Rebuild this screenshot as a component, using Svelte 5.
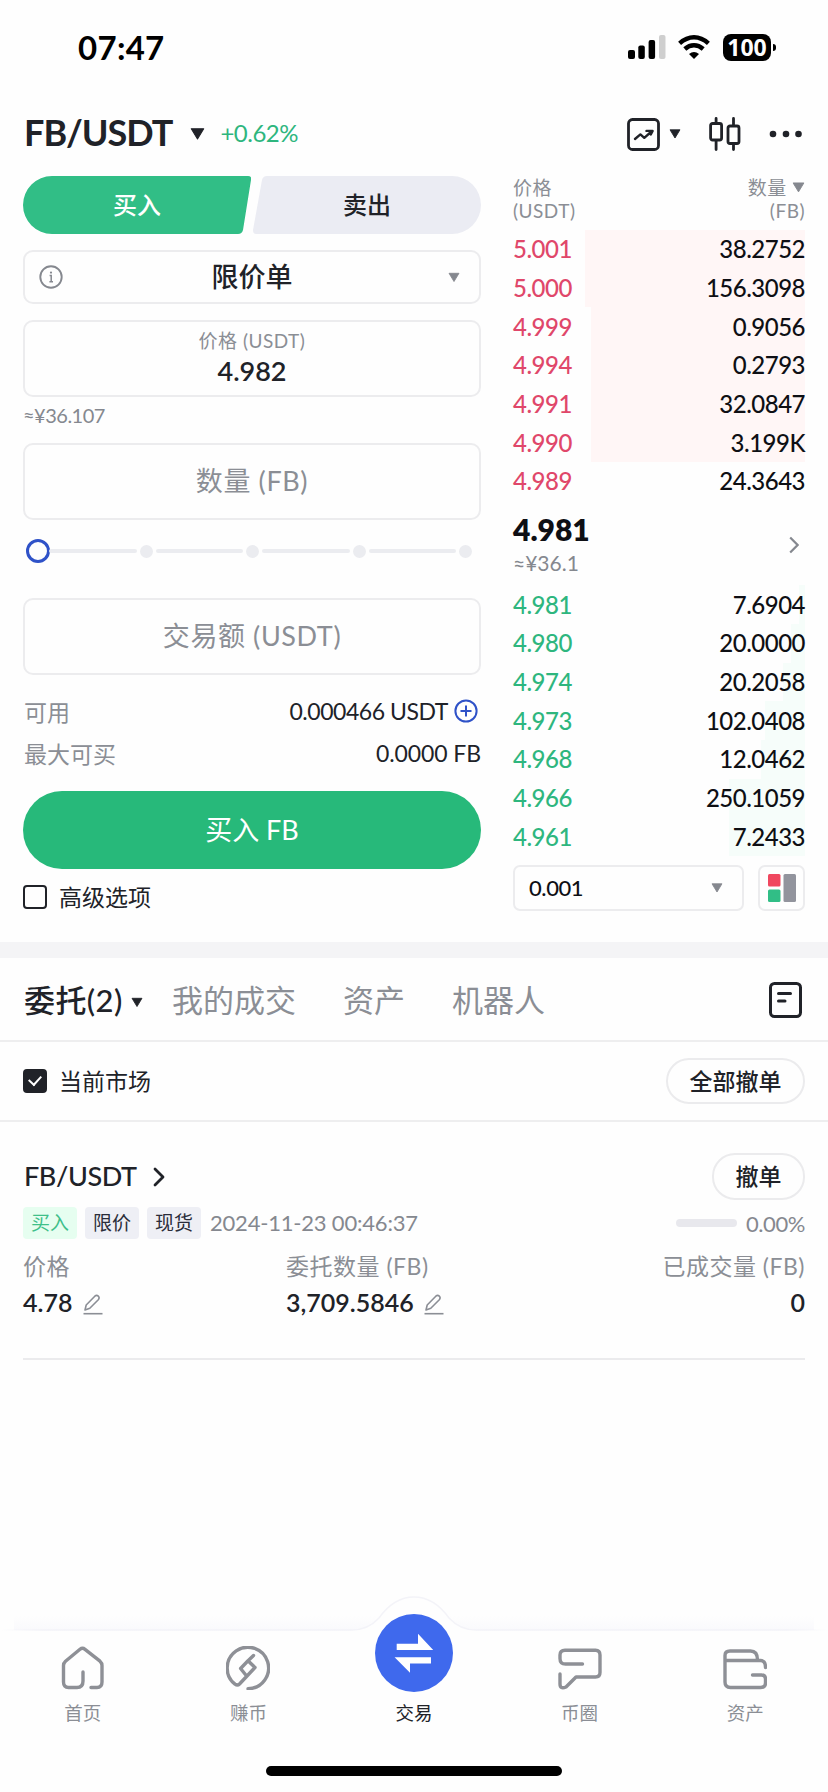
<script>
  const asks = [
    { price: '5.001', qty: '38.2752', depth: 220 },
    { price: '5.000', qty: '156.3098', depth: 220 },
    { price: '4.999', qty: '0.9056', depth: 214 },
    { price: '4.994', qty: '0.2793', depth: 214 },
    { price: '4.991', qty: '32.0847', depth: 214 },
    { price: '4.990', qty: '3.199K', depth: 214 },
    { price: '4.989', qty: '24.3643', depth: 0 },
  ];

  const bids = [
    { price: '4.981', qty: '7.6904', depth: 6 },
    { price: '4.980', qty: '20.0000', depth: 14 },
    { price: '4.974', qty: '20.2058', depth: 22 },
    { price: '4.973', qty: '102.0408', depth: 40 },
    { price: '4.968', qty: '12.0462', depth: 44 },
    { price: '4.966', qty: '250.1059', depth: 76 },
    { price: '4.961', qty: '7.2433', depth: 76 },
  ];

  let side = $state('buy');
  let advanced = $state(false);
  let currentMarket = $state(true);
</script>

{#snippet caret(w, h)}
  <svg class="caret" width={w} height={h} viewBox="0 0 14 11"><path d="M1.2 .6H12.8L7 10.2Z" fill="currentColor" stroke="currentColor" stroke-linejoin="round" /></svg>
{/snippet}

{#snippet pencil()}
  <svg class="pencil" width="20" height="21" viewBox="0 0 20 21" fill="none" stroke="#8b8e95" stroke-width="1.6" stroke-linejoin="round">
    <path d="M2 16L3.2 11L11.8 2.2Q13.6 .6 15.3 2.1Q16.9 3.8 15.3 5.7L6.8 14.2Z" />
    <path d="M.5 19.7H19.5" />
  </svg>
{/snippet}

<div class="screen">
  <header class="status">
    <span class="time">07:47</span>
    <div class="status-icons">
      <svg width="38" height="24" viewBox="0 0 38 24">
        <rect x="0" y="15" width="7" height="9" rx="2" />
        <rect x="10.3" y="10.5" width="6.5" height="13.5" rx="2" />
        <rect x="20.6" y="5" width="6.5" height="19" rx="2" />
        <rect x="31" y="0" width="6.5" height="24" rx="2" fill="#cfcfcf" />
      </svg>
      <svg width="32" height="24" viewBox="0 0 32 24" fill="none" stroke="#000" stroke-width="4.4">
        <path d="M1.6 8.4Q8.3 2.3 16 2.3T30.4 8.4" />
        <path d="M6.8 14Q11 10.2 16 10.2T25.2 14" />
        <path d="M11 19Q16 14.8 21 19L16 24Z" fill="#000" stroke="none" />
      </svg>
      <div class="battery">100</div>
    </div>
  </header>

  <div class="pair-bar">
    <h1>FB/USDT</h1>
    {@render caret(15, 12)}
    <span class="change">+0.62%</span>
    <div class="tools">
      <svg width="33" height="33" viewBox="0 0 33 33" fill="none" stroke="#202228" stroke-width="2.8" stroke-linecap="round" stroke-linejoin="round">
        <rect x="1.5" y="1.5" width="30" height="30" rx="4" />
        <path d="M8 21L13.4 16.4L17.3 19.8L25 13M19.5 12.9H25.6L23.8 16.5" stroke-width="2.4" />
      </svg>
      {@render caret(12, 10)}
      <svg class="candles" width="32" height="34" viewBox="0 0 32 34" fill="none" stroke="#202228" stroke-width="2.8" stroke-linecap="round">
        <rect x="1.6" y="6.5" width="11" height="16.5" rx="2" />
        <rect x="19" y="9" width="11" height="17.5" rx="2" />
        <path d="M7.1 1.5V6M7.1 23.5V32.5M24.5 1.5V8.5M24.5 27V32.5" />
      </svg>
      <svg width="34" height="8" viewBox="0 0 34 8" fill="#202228"><circle cx="4" cy="4" r="3.3" /><circle cx="17" cy="4" r="3.3" /><circle cx="29.5" cy="4" r="3.3" /></svg>
    </div>
  </div>

  <main class="trade">
    <section class="form">
      <div class="sides">
        <button class="buy" class:active={side === 'buy'} onclick={() => (side = 'buy')}>买入</button>
        <button class="sell" class:active={side === 'sell'} onclick={() => (side = 'sell')}>卖出</button>
      </div>

      <div class="box select">
        <svg width="24" height="24" viewBox="0 0 24 24" fill="none" stroke="#85888f" stroke-width="1.9">
          <circle cx="12" cy="12" r="10.7" />
          <path d="M10.6 10.6H12.2V16.6M10.4 16.8H14" stroke-width="1.5" /><circle cx="12" cy="7.6" r="1.1" fill="#85888f" stroke="none" />
        </svg>
        <span>限价单</span>
        {@render caret(12, 11)}
      </div>

      <div class="box price">
        <small>价格 (USDT)</small>
        <b>4.982</b>
      </div>
      <div class="approx">≈¥36.107</div>

      <div class="box field">数量 (FB)</div>

      <div class="slider">
        <i class="knob"></i>
        {#each [25, 50, 75, 100] as step (step)}
          <i class="track"></i><i class="stop"></i>
        {/each}
      </div>

      <div class="box field">交易额 (USDT)</div>

      <div class="info first">
        <span>可用</span>
        <b>0.000466 USDT</b>
        <svg width="24" height="24" viewBox="0 0 24 24" fill="none" stroke="#2f52c8" stroke-width="2"><circle cx="12" cy="12" r="10.6" /><path d="M12 6.5V17.5M6.5 12H17.5" /></svg>
      </div>
      <div class="info"><span>最大可买</span><b>0.0000 FB</b></div>

      <button class="submit">买入 FB</button>

      <label class="check">
        <input type="checkbox" bind:checked={advanced} />高级选项
      </label>
    </section>

    <section class="book">
      <div class="book-head">
        <span>价格<br />(USDT)</span>
        <span class="right">数量 {@render caret(13, 11)}<br />(FB)</span>
      </div>
      {#each asks as row (row.price)}
        <div class="row ask"><i style="width: {row.depth}px"></i><span>{row.price}</span><b>{row.qty}</b></div>
      {/each}
      <div class="last">
        <div><strong>4.981</strong><small>≈¥36.1</small></div>
        <svg width="10" height="18" viewBox="0 0 10 18" fill="none" stroke="#85888f" stroke-width="2.2"><path d="M1.2 1.5L8.6 9L1.2 16.5" /></svg>
      </div>
      {#each bids as row (row.price)}
        <div class="row bid"><i style="width: {row.depth}px"></i><span>{row.price}</span><b>{row.qty}</b></div>
      {/each}
      <div class="book-foot">
        <div class="box precision">0.001 {@render caret(12, 10)}</div>
        <div class="box layout">
          <svg width="28" height="28" viewBox="0 0 28 28"><rect width="12.5" height="12.5" rx="1.5" fill="#f0475f" /><rect y="15.5" width="12.5" height="12.5" rx="1.5" fill="#31be86" /><rect x="15.5" width="12.5" height="28" rx="1.5" fill="#92949d" /></svg>
        </div>
      </div>
    </section>
  </main>

  <nav class="tabs">
    <span class="current">委托(2) {@render caret(12, 11)}</span>
    <span>我的成交</span>
    <span>资产</span>
    <span>机器人</span>
    <svg class="history" width="33" height="36" viewBox="0 0 33 36" fill="none" stroke="#202228" stroke-width="3" stroke-linecap="round"><rect x="1.5" y="1.5" width="30" height="33" rx="4" /><path d="M9.5 11.5H21.5M9.5 19H16" /></svg>
  </nav>

  <div class="filter">
    <label class="check">
      <input type="checkbox" bind:checked={currentMarket} />当前市场
    </label>
    <button class="pill">全部撤单</button>
  </div>

  <article class="order">
    <div class="order-top">
      <h2>FB/USDT</h2>
      <svg width="12" height="20" viewBox="0 0 12 20" fill="none" stroke="#202228" stroke-width="2.8" stroke-linecap="round" stroke-linejoin="round"><path d="M2 2L10 10L2 18" /></svg>
      <button class="pill small">撤单</button>
    </div>
    <div class="meta">
      <span class="tag green">买入</span>
      <span class="tag">限价</span>
      <span class="tag">现货</span>
      <time>2024-11-23 00:46:37</time>
      <i class="progress"></i>
      <span class="filled">0.00%</span>
    </div>
    <dl>
      <div><dt>价格</dt><dd>4.78 {@render pencil()}</dd></div>
      <div><dt>委托数量 (FB)</dt><dd>3,709.5846 {@render pencil()}</dd></div>
      <div><dt>已成交量 (FB)</dt><dd>0</dd></div>
    </dl>
  </article>

  <footer>
    <svg class="edge" width="828" height="60" viewBox="0 0 828 60">
      <defs>
        <linearGradient id="fade" gradientUnits="userSpaceOnUse" x1="0" x2="828"><stop offset="0" stop-color="#f3f3f8" stop-opacity="0" /><stop offset=".05" stop-color="#f3f3f8" /><stop offset=".95" stop-color="#f3f3f8" /><stop offset="1" stop-color="#f3f3f8" stop-opacity="0" /></linearGradient>
        <linearGradient id="haze" gradientUnits="userSpaceOnUse" x1="0" x2="0" y1="26" y2="40"><stop offset="0" stop-color="#f9f9fc" stop-opacity="0" /><stop offset="1" stop-color="#f9f9fc" /></linearGradient>
      </defs>
      <path d="M14 26H380L379 28Q368 40 352 40H14ZM814 26H448L449 28Q460 40 476 40H814Z" fill="url(#haze)" />
      <path d="M0 40H352Q368 40 379 28Q394 7 414 7T449 28Q460 40 476 40H828" fill="none" stroke="url(#fade)" stroke-width="1.5" />
    </svg>
    <div class="nav">
      <a href="#home">
        <svg width="44" height="44" viewBox="0 0 44 44"><path d="M22 32V26V35Q22 41.5 16 41.5H7.5Q2.5 41.5 2.5 36V19.5Q2.5 17 4.5 15.2L19 3.3Q21.5 1.3 24 3.3L39 15.2Q41 17 41 19.5V36Q41 41.5 36 41.5H30" /></svg>
        首页
      </a>
      <a href="#earn">
        <svg width="44" height="44" viewBox="0 0 44 44"><path d="M22 42.7A20.7 20.7 0 1 0 9 38.2Q11.5 40 13.5 38L29 21.5L22 14.8L14.6 22.5L20.2 29.5M20.5 16.3L27.5 9.5" /></svg>
        赚币
      </a>
      <a href="#trade" class="active">
        <span class="fab">
          <svg width="40" height="40" viewBox="0 0 40 40" fill="#fff"><path d="M2.7 10.7H24V.8L39.2 17H2.7ZM37 24.3H.6L16 39.8V30.5H37Z" /></svg>
        </span>
        交易
      </a>
      <a href="#community">
        <svg width="44" height="44" viewBox="0 0 44 44"><path d="M24.5 18H7.5Q2 18 2 12.5V9Q2 4.2 7 4.2H37.5Q42 4.2 42 9V26.5Q42 31 37.5 31H18L8 41Q2 43.5 2 38V28" /></svg>
        币圈
      </a>
      <a href="#assets">
        <svg width="44" height="44" viewBox="0 0 44 44"><path d="M2 14.5V36Q2 41.5 7.5 41.5H37.5Q42.5 41.5 42.5 37V33Q42.5 29 38.5 29H29.5M2 14.5H37.5Q42.5 14.5 42.5 21.5M2 14.5V9.5Q2 5 7 5H27.5Q34.5 5 34.5 14" /></svg>
        资产
      </a>
    </div>
    <div class="home-bar"></div>
  </footer>
</div>

<style>
  :global(body) { margin: 0; background: #fefefe; }
  .screen {
    width: 828px; height: 1792px; display: flex; flex-direction: column; overflow: hidden;
    font-family: Lato, "Noto Sans CJK SC", sans-serif; color: #202228; background: #fefefe;
  }
  * { box-sizing: border-box; }
  svg { display: block; flex: none; }
  h1, h2, dl, dd { margin: 0; }
  b { font-weight: 500; }
  button { border: 0; padding: 0 0 3px; font: inherit; color: inherit; background: none; }
  .caret { display: inline-block; }

  .status { height: 94px; padding: 0 52px 0 78px; display: flex; justify-content: space-between; align-items: center; color: #000; }
  .time { font-size: 33px; font-weight: 700; letter-spacing: 0.3px; }
  .status-icons { display: flex; align-items: center; gap: 12px; }
  .battery {
    position: relative; width: 48px; height: 27px; margin: 0 5px 0 1px; border-radius: 8px; background: #000;
    color: #fefefe; font: 700 23px/27px "Noto Sans", sans-serif; text-align: center;
  }
  .battery::after { content: ''; position: absolute; right: -5px; top: 10px; width: 3px; height: 7px; border-radius: 0 4px 4px 0; background: #000; }

  .pair-bar { height: 80px; padding: 0 25px 0 24px; display: flex; align-items: center; }
  h1 { font-size: 36px; font-weight: 700; line-height: 76px; height: 80px; margin-right: 18px; letter-spacing: -1px; }
  .change { margin: 0 0 3px 15px; font-size: 24px; letter-spacing: -0.5px; color: #2eb67e; }
  .tools { margin-left: auto; display: flex; align-items: center; }
  .tools .caret { margin-left: 9px; }
  .candles { margin: 0 28px 0 28px; }

  .trade { height: 768px; padding: 2px 23px 0; display: flex; justify-content: space-between; }
  .form { width: 458px; }
  .sides { height: 58px; display: flex; justify-content: space-between; font-size: 24px; font-weight: 500; }
  .sides button { width: 228px; height: 58px; background: #ebecf3; }
  .sides .buy { clip-path: path('M29 0H225Q229 0 228 4L220 54Q219 58 215 58H29A29 29 0 0 1 29 0Z'); }
  .sides .sell { clip-path: path('M199 0H14Q10 0 9 4L0 54Q0 58 3 58H199A29 29 0 0 0 199 0Z'); }
  .sides .buy.active { background: #31be86; color: #fff; }
  .sides .sell.active { background: #f0475f; color: #fff; }

  .box { border: 2px solid #ececee; border-radius: 10px; }
  .select { height: 54px; margin-top: 16px; padding: 0 19px 0 14px; display: flex; align-items: center; justify-content: space-between; font-size: 27px; font-weight: 500; }
  .select span { margin: 0 0 3px -7px; }
  .select .caret, .precision .caret, .book-head .caret { color: #85888f; }
  .price { height: 77px; margin-top: 16px; padding-top: 3px; display: flex; flex-direction: column; align-items: center; }
  .price small { font-size: 19px; line-height: 32px; letter-spacing: 0.5px; color: #8b8e95; }
  .price b { font-size: 27px; line-height: 27px; font-weight: 600; }
  .approx { height: 46px; font-size: 20px; line-height: 36px; letter-spacing: -0.5px; color: #85888f; }
  .field { height: 77px; font-size: 27px; line-height: 72px; letter-spacing: 0.6px; text-align: center; color: #8b8e95; }

  .slider { height: 62px; margin: 0 9px 16px 3px; display: flex; align-items: center; }
  .knob { width: 24px; height: 24px; margin-right: -4px; border: 3px solid #2f52c8; border-radius: 50%; }
  .track { flex: 1; height: 4px; margin: 0 3px; border-radius: 2px; background: #ebecf0; }
  .stop { width: 13px; height: 13px; border-radius: 50%; background: #ebecf0; }

  .info { height: 42px; display: flex; align-items: center; font-size: 23px; }
  .info span { margin: 0 auto 1px 1px; color: #8b8e95; }
  .info b { font-weight: 400; letter-spacing: -0.1px; }
  .info.first { margin-top: 15px; }
  .info.first b { letter-spacing: -0.45px; }
  .info svg { margin: 0 3px 0 6px; }
  .submit { display: block; width: 458px; height: 78px; margin-top: 17px; border-radius: 39px; background: #27b97a; color: #fff; font-size: 27px; }

  .check { display: flex; align-items: center; font-size: 23px; line-height: 24px; }
  .form .check { margin-top: 16px; }
  input { appearance: none; width: 24px; height: 24px; margin: 0 12px 0 0; border: 2.5px solid #202228; border-radius: 4px; }
  input:checked { background: #202228; position: relative; }
  input:checked::after {
    content: ''; position: absolute; left: 6px; top: 2px; width: 6px; height: 10px;
    border: solid #fff; border-width: 0 2px 2px 0; transform: rotate(42deg);
  }

  .book { width: 292px; color: #0e0f14; }
  .book-head { height: 54px; display: flex; justify-content: space-between; font-size: 19px; line-height: 23px; letter-spacing: 0.5px; color: #8b8e95; }
  .book-head .caret { margin-bottom: 2px; }
  .right { text-align: right; }
  .row { position: relative; height: 38.7px; display: flex; justify-content: space-between; align-items: center; font-size: 24px; font-weight: 500; line-height: 38px; letter-spacing: -0.5px; }
  .row i { position: absolute; right: 0; top: 0; bottom: 0; }
  .row span, .row b { position: relative; }
  .ask i { background: #fff6f6; }
  .ask span { color: #e0476a; }
  .bid i { background: #f6fdfa; }
  .bid span { color: #2eb67e; }
  .last { height: 84.5px; padding: 4px 6px 0 0; display: flex; justify-content: space-between; align-items: center; }
  .last strong { display: block; font-size: 30px; line-height: 36px; font-weight: 800; }
  .last small { display: block; font-size: 21px; line-height: 32px; color: #85888f; }
  .last svg { margin-bottom: 1px; }
  .book-foot { margin-top: 9px; display: flex; justify-content: space-between; }
  .precision { width: 231px; height: 46px; padding: 0 19px 1px 14px; border-radius: 7px; display: flex; align-items: center; justify-content: space-between; font-size: 22px; font-weight: 500; letter-spacing: -0.4px; }
  .layout { width: 47px; height: 46px; border-radius: 7px; display: grid; place-items: center; }

  .tabs { height: 100px; padding: 0 26px 0 24px; border-top: 16px solid #f4f4f6; border-bottom: 2px solid #eeeeef; display: flex; align-items: center; font-size: 31px; color: #8b8e95; }
  .tabs span { margin: 0 47px 2px 0; white-space: nowrap; }
  .tabs .current { margin-right: 29px; font-weight: 500; letter-spacing: 0.4px; color: #202228; }
  .current .caret { margin-bottom: 4px; }
  .history { margin: 2px 0 0 auto; }

  .filter { height: 80px; padding: 0 23px; border-bottom: 2px solid #eeeeef; display: flex; align-items: center; justify-content: space-between; }
  .pill { width: 139px; height: 46px; border: 2px solid #ebebed; border-radius: 23px; font-size: 23px; font-weight: 500; }
  .pill.small { width: 93px; height: 47px; margin-left: auto; }

  .order { margin: 0 23px; height: 238px; padding-top: 31px; border-bottom: 2px solid #ebebed; }
  .order-top { height: 47px; display: flex; align-items: center; gap: 15px; }
  h2 { margin: 0 1px 2px; font-size: 27px; font-weight: 500; letter-spacing: -0.4px; }
  .meta { height: 32px; margin-top: 7px; display: flex; align-items: center; font-size: 22px; color: #85888f; }
  .meta time { margin: 0 0 1px 1px; letter-spacing: -0.2px; }
  .tag { width: 54px; height: 32px; margin-right: 8px; border-radius: 4px; background: #eeeff5; color: #2a2d3a; font-size: 19px; line-height: 31px; text-align: center; }
  .green { background: #e6fef0; color: #3fc08a; }
  .progress { width: 61px; height: 8px; margin: 0 9px 0 auto; border-radius: 4px; background: #e8e8ed; }
  .filled { letter-spacing: -0.4px; }
  dl { margin-top: 9px; display: flex; justify-content: space-between; }
  dl div { width: 263px; }
  dl div:last-child { width: auto; margin-left: auto; text-align: right; }
  dt { font-size: 23px; line-height: 37px; letter-spacing: 0.5px; color: #8b8e95; }
  dd { font-size: 25px; line-height: 35px; font-weight: 600; }
  .pencil { display: inline-block; margin-left: 4px; vertical-align: -3px; }

  footer { margin-top: auto; height: 202px; position: relative; }
  .edge { position: absolute; left: 0; top: 0; }
  .nav { position: relative; height: 176px; padding-top: 56px; display: grid; grid-template-columns: repeat(5, 1fr); }
  .nav a { display: flex; flex-direction: column; align-items: center; font-size: 18.5px; line-height: 28px; color: #8b8e95; text-decoration: none; }
  .nav a > svg { margin-bottom: 9px; fill: none; stroke: #8e9096; stroke-width: 3.4; stroke-linecap: round; stroke-linejoin: round; }
  .nav .active { color: #202228; }
  .fab { width: 78px; height: 78px; margin: -32px 0 7px; border-radius: 50%; background: #3f69ed; display: grid; place-items: center; }
  .home-bar { width: 296px; height: 10px; margin: 0 auto; border-radius: 5px; background: #000; }
</style>
